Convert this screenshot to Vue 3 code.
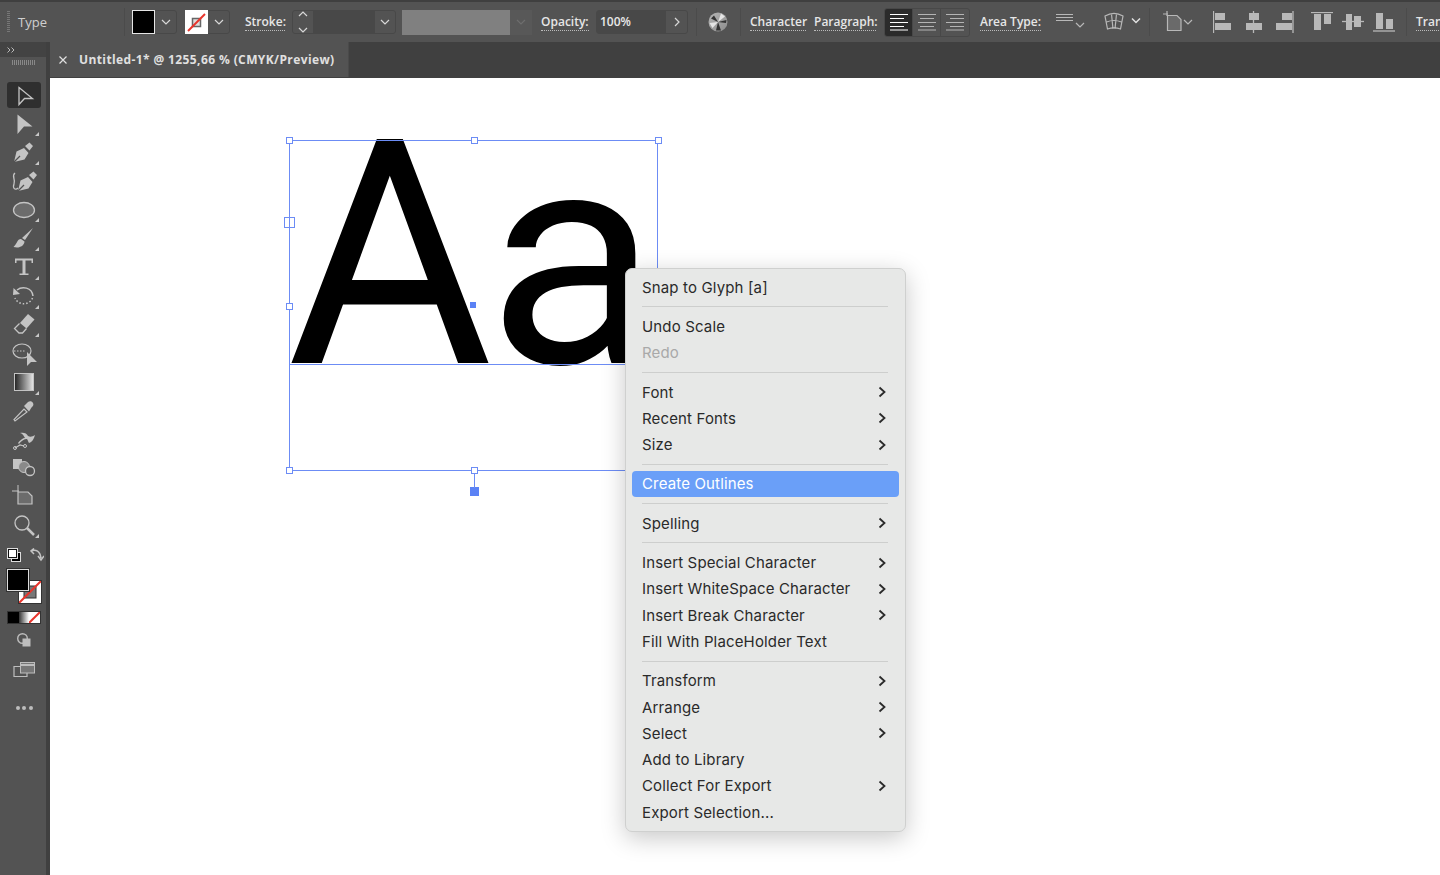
<template>
  <div class="app">
    <!-- options bar -->
    <header class="options">
      <div class="grip"></div>
      <span class="doc-type">Type</span>
      <i class="vsep sep-type"></i>

      <div class="field fill-field">
        <span class="swatch black"></span>
        <span class="drop"><svg width="12" height="8" viewBox="0 0 12 8"><path d="M2 2l4 4 4-4" /></svg></span>
      </div>
      <div class="field stroke-field">
        <span class="swatch none">
          <svg width="23" height="23" viewBox="0 0 23 23">
            <rect x="7.500" y="7.500" width="8" height="8" fill="#ddd" stroke="#666" stroke-width="1.500" />
            <path d="M3 20L20 3" />
          </svg>
        </span>
        <span class="drop"><svg width="12" height="8" viewBox="0 0 12 8"><path d="M2 2l4 4 4-4" /></svg></span>
      </div>

      <span class="lbl stroke-lbl">Stroke:</span>
      <div class="field stroke-size">
        <span class="stepper">
          <svg width="12" height="26" viewBox="0 0 12 26"><path d="M2 7l4-4 4 4M2 19l4 4 4-4" /></svg>
        </span>
        <span class="blank"></span>
        <span class="drop"><svg width="12" height="8" viewBox="0 0 12 8"><path d="M2 2l4 4 4-4" /></svg></span>
      </div>

      <span class="grey-bar"></span>
      <span class="drop-off"><svg width="12" height="8" viewBox="0 0 12 8"><path d="M2 2l4 4 4-4" /></svg></span>

      <span class="lbl opacity-lbl">Opacity:</span>
      <div class="field opacity">
        <span class="value">100%</span>
        <span class="next"><svg width="8" height="12" viewBox="0 0 8 12"><path d="M2 2l4 4-4 4" /></svg></span>
      </div>
      <i class="vsep sep-a"></i>
      <span class="globe">
        <svg width="20" height="20" viewBox="0 0 20 20">
          <defs>
            <linearGradient id="globeFill" x1="0" y1="0" x2="1" y2="1">
              <stop offset="0" stop-color="#b5b5b5" />
              <stop offset="1" stop-color="#8c8c8c" />
            </linearGradient>
          </defs>
          <circle cx="10" cy="10" r="9.500" fill="url(#globeFill)" />
          <path class="g-dark" d="M10 10L6 3.500 3 6.500zM10 10l-2 8.500 5 0zM10 10l8 1 .5-3z" />
          <path class="g-light" d="M10 10L13 1.500l4 3zM10 10l-8.500 1 3 5z" />
        </svg>
      </span>
      <i class="vsep sep-b"></i>

      <span class="lbl char-lbl">Character</span>
      <span class="lbl para-lbl">Paragraph:</span>
      <div class="aligns">
        <span class="align on"><svg width="18" height="18" viewBox="0 0 18 18"><path d="M0 1.500h18M0 5.500h14M0 9.500h18M0 13.500h14M0 17h18" /></svg></span>
        <span class="align"><svg width="18" height="18" viewBox="0 0 18 18"><path d="M0 1.500h18M2 5.500h14M0 9.500h18M2 13.500h14M0 17h18" /></svg></span>
        <span class="align"><svg width="18" height="18" viewBox="0 0 18 18"><path d="M0 1.500h18M4 5.500h14M0 9.500h18M4 13.500h14M0 17h18" /></svg></span>
      </div>

      <span class="lbl area-lbl">Area Type:</span>
      <span class="ico area-ico">
        <svg width="29" height="20" viewBox="0 0 29 20"><path d="M0 2.500h17M0 5.500h17M0 8.500h17" /><path d="M20 11l4 4 4-4" /></svg>
      </span>
      <span class="ico warp-ico">
        <svg width="38" height="22" viewBox="0 0 38 22">
          <path d="M2 5c6-3.500 12-3.500 18 0l-2.500 13c-4-1.500-9-1.500-13 0zM8.500 3l1.500 15M13.500 3l-1.500 15M3.500 11c5-2 10-2 15 0" />
          <path class="thick" d="M29 7.500l4 4 4-4" />
        </svg>
      </span>
      <i class="vsep sep-c"></i>
      <span class="ico art-ico">
        <svg width="30" height="22" viewBox="0 0 30 22">
          <path d="M0 3h5M4 0v5" />
          <path class="doc" d="M4.500 4.500H14l4 4v11H4.500z" />
          <path d="M21 9l4 4 4-4" />
        </svg>
      </span>
      <div class="obj-aligns">
        <svg width="20" height="22" viewBox="0 0 20 22"><path d="M.5 0v22" /><rect x="2" y="2" width="10" height="7" /><rect x="2" y="12" width="16" height="7" /></svg>
        <svg width="18" height="22" viewBox="0 0 18 22"><path d="M8.500 0v22" /><rect x="4" y="2" width="10" height="7" /><rect x="1" y="12" width="16" height="7" /></svg>
        <svg width="19" height="22" viewBox="0 0 19 22"><path d="M18 0v22" /><rect x="7" y="2" width="10" height="7" /><rect x="1" y="12" width="16" height="7" /></svg>
        <svg width="22" height="20" viewBox="0 0 22 20"><path d="M0 .5h22" /><rect x="3" y="2" width="7" height="16" /><rect x="13" y="2" width="7" height="10" /></svg>
        <svg width="22" height="20" viewBox="0 0 22 20"><path d="M0 9.500h22" /><rect x="4" y="2" width="6" height="16" /><rect x="12" y="4" width="7" height="11" /></svg>
        <svg width="22" height="20" viewBox="0 0 22 20"><path d="M0 19h22" /><rect x="3" y="1" width="7" height="16" /><rect x="13" y="7" width="7" height="10" /></svg>
      </div>
      <i class="vsep sep-d"></i>
      <span class="lbl tran-lbl">Transform</span>
    </header>

    <div class="main">
      <!-- tools -->
      <aside class="tools">
        <div class="tools-head">
          <svg width="8" height="6" viewBox="0 0 8 6"><path d="M.5.500L3 3 .5 5.500M4.500.500L7 3 4.500 5.500" /></svg>
        </div>
        <div class="tools-grip"></div>

        <div class="tool active">
          <svg class="ti" viewBox="0 0 34 28"><path d="M12 6.500L25.500 17.500H17.500L12 23.500z" fill="none" stroke-width="1.300" /></svg>
        </div>
        <div class="tool corner">
          <svg class="ti" viewBox="0 0 34 28"><path class="fl" d="M10.500 4.500L25.500 16.500H17L10.500 24z" /></svg>
        </div>
        <div class="tool corner">
          <svg class="ti" viewBox="0 0 34 28">
            <path class="fl" d="M7 24L9.500 13.500 17 10 21.500 15 17.500 21.500zM18 8l4.500-3.500 3.500 3.500-3.500 4.500z" />
            <path class="cut" d="M7 24l6-6" />
          </svg>
        </div>
        <div class="tool">
          <svg class="ti" viewBox="0 0 34 28">
            <path class="fl" d="M11 24L13.500 13.500 21 10 25.500 15 21.500 21.500zM22 8l4.500-3.500 3.500 3.500-3.500 4.500z" />
            <path class="cut" d="M11 24l6-6" />
            <path d="M8 6C4 9 9 12 7 17c-1.500 4 1 7 4 4" fill="none" stroke-width="1.300" />
          </svg>
        </div>
        <div class="tool corner">
          <svg class="ti" viewBox="0 0 34 28"><ellipse cx="17" cy="14" rx="10.500" ry="7.500" fill="#6c6c6c" stroke-width="1.300" /></svg>
        </div>
        <div class="tool corner">
          <svg class="ti" viewBox="0 0 34 28">
            <path class="fl" d="M26 4L18 16 15 14zM14 15c-4 0-4 5-7.500 8 5.500 1.500 10.500-.5 11-5.500z" />
          </svg>
        </div>
        <div class="tool corner">
          <svg class="ti" viewBox="0 0 34 28">
            <path class="fl" d="M8 10V5.500H26V10H24.500V7.500H18.500V20.500H21.500V22H12.500V20.500H15.500V7.500H9.500V10z" />
          </svg>
        </div>
        <div class="tool corner">
          <svg class="ti" viewBox="0 0 34 28">
            <path d="M10 8c5-4 15-3 16 6" fill="none" stroke-width="1.500" />
            <path class="fl" d="M6.500 6l6.500 6-7 1z" />
            <path d="M25.500 16A9.500 9.500 0 0 1 8 16" fill="none" stroke-width="1.500" stroke-dasharray="1.500 2" />
          </svg>
        </div>
        <div class="tool corner">
          <svg class="ti" viewBox="0 0 34 28">
            <path class="fl" d="M13 12l8-9 6.500 5.500-8 9z" />
            <path d="M12.500 12.500L7.500 17.500 12 22h3.500l4-4.500" fill="none" stroke-width="1.300" />
          </svg>
        </div>
        <div class="tool">
          <svg class="ti" viewBox="0 0 34 28">
            <ellipse cx="15" cy="12" rx="9" ry="7" fill="none" stroke-width="1.200" />
            <path d="M7 12h11" stroke-dasharray="1.500 1.500" stroke-width="1.200" />
            <path class="fl" d="M20 13l10 10h-6l-4 4z" />
          </svg>
        </div>
        <div class="tool corner">
          <svg class="ti" viewBox="0 0 34 28">
            <defs>
              <linearGradient id="toolGrad" x1="0" x2="1" y1="0" y2="0">
                <stop offset="0" stop-color="#222" />
                <stop offset="1" stop-color="#e8e8e8" />
              </linearGradient>
            </defs>
            <rect x="7.500" y="5.500" width="19" height="17" fill="url(#toolGrad)" stroke-width="1" />
          </svg>
        </div>
        <div class="tool">
          <svg class="ti" viewBox="0 0 34 28">
            <path d="M8 24l-1-1.500L17 12l3 3z" fill="none" stroke-width="1.200" />
            <path class="fl" d="M17 9l4-4c1.500-1 4-1 5 1s0 3-1.500 4.500L22 14.500z" />
          </svg>
        </div>
        <div class="tool">
          <svg class="ti" viewBox="0 0 34 28">
            <path class="fl" d="M11 18c2-3 5-5 7-5-1-2-3-5-5-5 3-1 7 0 8 3 2 1 4 1 7-1-1 4-3 7-6 8-1-1-1-3-2-4-3 0-6 2-8 5z" />
            <path d="M8 23l5-3 4 1" fill="none" stroke-width="1.200" />
            <circle cx="8" cy="23" r="1.500" fill="none" stroke-width="1" />
            <circle cx="18" cy="21" r="1.500" fill="none" stroke-width="1" />
          </svg>
        </div>
        <div class="tool">
          <svg class="ti" viewBox="0 0 34 28">
            <rect class="fl" x="6" y="5" width="9" height="10" />
            <circle cx="17" cy="13" r="5.500" fill="#8a8a8a" stroke="none" />
            <circle cx="23" cy="17" r="4.500" fill="#535353" stroke-width="1.300" />
          </svg>
        </div>
        <div class="tool">
          <svg class="ti" viewBox="0 0 34 28">
            <path d="M5 8h7M11 2v7" stroke-width="1" />
            <path d="M11 9h10l4 4v8H11z" fill="#6c6c6c" stroke-width="1.200" />
          </svg>
        </div>
        <div class="tool corner">
          <svg class="ti" viewBox="0 0 34 28">
            <circle cx="15" cy="12" r="7" fill="none" stroke-width="1.300" />
            <path d="M20 17l7 7" stroke-width="2.500" />
          </svg>
        </div>

        <div class="color-tools">
          <div class="default-row">
            <svg width="14" height="14" viewBox="0 0 14 14">
              <rect x="4.500" y="4.500" width="9" height="9" fill="#000" stroke="#ddd" />
              <rect x="1.500" y="1.500" width="8" height="8" fill="#fff" stroke="#111" />
              <rect x=".5" y=".5" width="10" height="10" fill="none" stroke="#ddd" />
            </svg>
            <svg width="14" height="14" viewBox="0 0 14 14">
              <path class="swap" d="M1 3c5-2 9 0 10 7M8 8l3 4 3-4M4 0.500L1 3l3 3" />
            </svg>
          </div>
          <div class="fill-stroke">
            <span class="stroke-box">
              <svg width="22" height="22" viewBox="0 0 22 22">
                <rect x="5" y="5" width="12" height="12" fill="#777" stroke="#333" />
                <path d="M0 22L22 0" stroke="#e8352c" stroke-width="2" />
              </svg>
            </span>
            <span class="fill-box"></span>
          </div>
          <div class="modes">
            <span class="m black"></span>
            <span class="m grad"></span>
            <span class="m nonem"><svg width="11" height="11" viewBox="0 0 11 11"><path d="M0 11L11 0" stroke="#e8352c" stroke-width="2" /></svg></span>
          </div>
          <svg class="draw-mode" width="16" height="16" viewBox="0 0 16 16">
            <circle cx="6.500" cy="6.500" r="4.800" fill="none" stroke="#bdbdbd" stroke-width="1.400" />
            <rect x="6.500" y="6.500" width="8" height="8" fill="#bdbdbd" />
          </svg>
          <svg class="screen-mode" width="22" height="16" viewBox="0 0 22 16">
            <path d="M7.500 4.500H1v10h13V11" fill="none" stroke="#bdbdbd" stroke-width="1.200" />
            <rect x="7.500" y=".5" width="14" height="10.500" fill="#777" stroke="#bdbdbd" />
            <path d="M7.500 3h14" stroke="#bdbdbd" stroke-width="2" />
          </svg>
          <div class="more"><i></i><i></i><i></i></div>
        </div>
      </aside>

      <div class="work">
        <div class="tabs">
          <div class="tab">
            <svg width="8" height="8" viewBox="0 0 8 8"><path d="M.5.500l7 7M7.500.500l-7 7" /></svg>
            <span>Untitled-1* @ 1255,66 % (CMYK/Preview)</span>
          </div>
        </div>

        <!-- artboard: the selected text sits freely on the canvas -->
        <div class="canvas">
          <div class="aa">A<span class="small-a">a</span></div>
          <div class="bbox"></div>
          <div class="baseline"></div>
          <i v-for="h in handles" :key="h.id" class="handle" :class="h.kind" :style="{ left: h.x + 'px', top: h.y + 'px' }"></i>
          <div class="stem"></div>
        </div>
      </div>
    </div>

    <!-- context menu -->
    <nav class="menu">
      <template v-for="(item, i) in menu" :key="i">
        <div v-if="item.sep" class="menu-sep"></div>
        <div v-else class="menu-row" :class="{ off: item.off, hot: item.hot }">
          <span>{{ item.label }}</span>
          <svg v-if="item.sub" width="9" height="12" viewBox="0 0 9 12"><path d="M1.500 1.500L6.500 6l-5 4.500" /></svg>
        </div>
      </template>
    </nav>
  </div>
</template>

<script setup>
const handles = [
  { id: 'tl', x: 239, y: 62 },
  { id: 'tc', x: 424, y: 62 },
  { id: 'tr', x: 608, y: 62 },
  { id: 'ml', x: 239, y: 228 },
  { id: 'bl', x: 239, y: 392 },
  { id: 'bc', x: 424, y: 392 },
  { id: 'wide', x: 234, y: 139, kind: 'tall' },
  { id: 'center', x: 420, y: 224, kind: 'dot' },
  { id: 'rot', x: 420, y: 409, kind: 'solid' }
]

const menu = [
  { label: 'Snap to Glyph [a]' },
  { sep: true },
  { label: 'Undo Scale' },
  { label: 'Redo', off: true },
  { sep: true },
  { label: 'Font', sub: true },
  { label: 'Recent Fonts', sub: true },
  { label: 'Size', sub: true },
  { sep: true },
  { label: 'Create Outlines', hot: true },
  { sep: true },
  { label: 'Spelling', sub: true },
  { sep: true },
  { label: 'Insert Special Character', sub: true },
  { label: 'Insert WhiteSpace Character', sub: true },
  { label: 'Insert Break Character', sub: true },
  { label: 'Fill With PlaceHolder Text' },
  { sep: true },
  { label: 'Transform', sub: true },
  { label: 'Arrange', sub: true },
  { label: 'Select', sub: true },
  { label: 'Add to Library' },
  { label: 'Collect For Export', sub: true },
  { label: 'Export Selection...' }
]
</script>

<style>
html,
body {
  margin: 0;
  background: #fff;
  overflow: hidden;
}
</style>

<style scoped>
.app {
  position: relative;
  width: 1440px;
  height: 875px;
  display: flex;
  flex-direction: column;
  overflow: hidden;
  font-family: "Open Sans", "Noto Sans", sans-serif;
  background: #fff;
}

/* options bar */
.options {
  flex: none;
  height: 40px;
  border-top: 2px solid #3f3f3f;
  display: flex;
  align-items: center;
  background: #535353;
  color: #e8e8e8;
  white-space: nowrap;
  overflow: hidden;
}
.options svg path {
  fill: none;
  stroke: #d8d8d8;
  stroke-width: 1.200;
}
.grip {
  flex: none;
  width: 3px;
  height: 22px;
  margin-left: 7px;
  background: repeating-linear-gradient(to bottom, #777 0 1px, transparent 1px 2px);
}
.doc-type {
  flex: none;
  margin-left: 8px;
  width: 36px;
  font-size: 13px;
  color: #cfcfcf;
}
.vsep {
  flex: none;
  width: 1px;
  height: 28px;
  background: #4b4b4b;
}
.sep-type { margin-left: 70px; }
.sep-a { margin-left: 8px; }
.sep-b { margin-left: 12px; }
.sep-c { margin-left: 8px; }
.sep-d { margin-left: 11px; }
.field {
  flex: none;
  display: flex;
  align-items: center;
  height: 24px;
  border: 1px solid #484848;
  border-radius: 3px;
}
.fill-field {
  margin-left: 7px;
  width: 45px;
  box-sizing: border-box;
}
.stroke-field {
  margin-left: 8px;
  width: 45px;
  box-sizing: border-box;
}
.swatch {
  width: 23px;
  height: 24px;
  flex: none;
  box-sizing: border-box;
  margin-left: -1px;
}
.swatch.black {
  background: #000;
  border: 1px solid #e6e6e6;
}
.swatch.none {
  background: #fff;
  display: flex;
  align-items: center;
}
.options .swatch.none svg path {
  stroke: #e8352c;
  stroke-width: 2;
}
.drop {
  flex: 1;
  height: 100%;
  display: flex;
  align-items: center;
  justify-content: center;
}
.lbl {
  flex: none;
  font-size: 12px;
  font-weight: 600;
  line-height: 16px;
  color: #e6e6e6;
  border-bottom: 1px dotted #bbb;
}
.stroke-lbl { margin-left: 15px; width: 40px; }
.stroke-size {
  margin-left: 7px;
  width: 104px;
  box-sizing: border-box;
}
.stepper {
  width: 21px;
  height: 100%;
  flex: none;
  display: flex;
  align-items: center;
  justify-content: center;
  border-right: 1px solid #484848;
  box-sizing: border-box;
}
.blank {
  width: 61px;
  height: 100%;
  flex: none;
  background: #484848;
}
.grey-bar {
  flex: none;
  margin-left: 6px;
  width: 108px;
  height: 25px;
  background: #808080;
}
.drop-off {
  flex: none;
  width: 22px;
  height: 25px;
  background: #585858;
  display: flex;
  align-items: center;
  justify-content: center;
}
.options .drop-off svg path { stroke: #6e6e6e; }
.opacity-lbl { margin-left: 9px; width: 48px; }
.opacity {
  margin-left: 7px;
  width: 92px;
  box-sizing: border-box;
}
.value {
  width: 69px;
  flex: none;
  height: 100%;
  box-sizing: border-box;
  padding-left: 3px;
  background: #484848;
  font-size: 12px;
  font-weight: 600;
  line-height: 22px;
}
.next {
  flex: 1;
  display: flex;
  justify-content: center;
}
.globe {
  flex: none;
  margin-left: 11px;
  display: flex;
}
.options .globe .g-dark {
  fill: #333;
  stroke: none;
}
.options .globe .g-light {
  fill: #e4e4e4;
  stroke: none;
}
.char-lbl { margin-left: 9px; width: 56px; }
.para-lbl { margin-left: 8px; width: 62px; }
.aligns {
  flex: none;
  margin-left: 8px;
  display: flex;
  height: 27px;
  border: 1px solid #484848;
  border-radius: 3px;
  box-sizing: content-box;
}
.align {
  width: 28px;
  display: flex;
  align-items: center;
  justify-content: center;
  border-right: 1px solid #484848;
  box-sizing: border-box;
}
.align:last-child { border-right: 0; }
.align.on {
  background: #2b2b2b;
  border-radius: 2px 0 0 2px;
}
.options .align svg path { stroke: #b4b4b4; }
.options .align.on svg path { stroke: #fff; }
.area-lbl { margin-left: 10px; width: 61px; }
.ico {
  flex: none;
  display: flex;
}
.options .ico svg path { stroke: #b8b8b8; }
.options .ico svg path.thick { stroke: #e0e0e0; stroke-width: 1.500; }
.options .ico svg path.doc { fill: #6a6a6a; }
.area-ico { margin-left: 15px; }
.warp-ico { margin-left: 18px; }
.art-ico { margin-left: 13px; }
.obj-aligns {
  flex: none;
  margin-left: 20px;
  display: flex;
  align-items: center;
  gap: 12px;
}
.obj-aligns svg:nth-child(4) { margin-left: 5px; }
.obj-aligns svg:nth-child(5),
.obj-aligns svg:nth-child(6) { margin-left: -3px; }
.obj-aligns svg rect { fill: #b8b8b8; }
.options .obj-aligns svg path { stroke: #b8b8b8; stroke-width: 1.300; }
.tran-lbl { margin-left: 9px; }

/* main area */
.main {
  flex: 1;
  min-height: 0;
  display: flex;
}
.tools {
  flex: none;
  width: 46px;
  box-sizing: content-box;
  border-right: 4px solid #404040;
  background: #535353;
  display: flex;
  flex-direction: column;
  align-items: flex-start;
}
.tools-head {
  align-self: stretch;
  height: 15px;
  background: #434343;
  padding-left: 7px;
  display: flex;
  align-items: center;
}
.tools-head svg path {
  fill: none;
  stroke: #bbb;
}
.tools-grip {
  width: 23px;
  height: 5px;
  margin: 3px 0 16px 12px;
  background: repeating-linear-gradient(to right, #888 0 1px, transparent 1px 2px);
}
.tool {
  position: relative;
  width: 34px;
  height: 28.700px;
  flex: none;
  margin-left: 7px;
}
.tool.active::before {
  content: "";
  position: absolute;
  left: 0;
  right: 0;
  top: 1px;
  height: 26px;
  background: #2f2f2f;
  border-radius: 3px;
}
.ti {
  position: relative;
  display: block;
  width: 34px;
  height: 28px;
}
.ti * {
  stroke: #c4c4c4;
}
.ti .fl {
  fill: #c4c4c4;
  stroke: none;
}
.ti .cut {
  fill: none;
  stroke: #535353;
  stroke-width: 1.200;
}
.tool.corner::after {
  content: "";
  position: absolute;
  right: 2px;
  bottom: 2px;
  border-style: solid;
  border-width: 0 0 4px 4px;
  border-color: transparent transparent #c8c8c8 transparent;
}
.color-tools {
  display: flex;
  flex-direction: column;
  align-items: center;
  width: 34px;
  margin: 7px 0 0 7px;
}
.default-row {
  align-self: stretch;
  display: flex;
  justify-content: space-between;
  height: 16px;
  align-items: center;
  margin-right: -3px;
}
.swap {
  fill: none;
  stroke: #c4c4c4;
  stroke-width: 1.500;
}
.fill-stroke {
  position: relative;
  align-self: stretch;
  height: 34px;
  margin-top: 6px;
}
.fill-box {
  position: absolute;
  left: 0;
  top: 0;
  width: 22px;
  height: 22px;
  box-sizing: border-box;
  background: #000;
  border: 1px solid #ddd;
  box-shadow: 0 0 0 1px #333;
}
.stroke-box {
  position: absolute;
  right: 0;
  bottom: 0;
  width: 22px;
  height: 22px;
  background: #fff;
  box-shadow: 0 0 0 1px #333;
}
.modes {
  display: flex;
  align-self: stretch;
  margin: 8px 0 0;
  border: 1px solid #333;
  box-sizing: border-box;
  height: 13px;
}
.m { flex: 1; }
.m.black { background: #000; }
.m.grad { background: linear-gradient(to right, #333, #fff); }
.m.nonem { background: #fff; display: flex; }
.draw-mode { margin-top: 8px; }
.screen-mode { margin-top: 14px; }
.more {
  display: flex;
  gap: 2.500px;
  margin-top: 28px;
}
.more i {
  width: 4px;
  height: 4px;
  border-radius: 50%;
  background: #bdbdbd;
}

.work {
  flex: 1;
  min-width: 0;
  display: flex;
  flex-direction: column;
}
.tabs {
  flex: none;
  height: 36px;
  background: #404040;
  display: flex;
}
.tab {
  width: 299px;
  height: 35px;
  box-sizing: border-box;
  padding-left: 9px;
  background: #535353;
  border-right: 1px solid #4a4a4a;
  display: flex;
  align-items: center;
  gap: 12px;
  font-size: 12px;
  font-weight: 700;
  letter-spacing: 0.390px;
  color: #e0e0e0;
  white-space: nowrap;
}
.tab svg path {
  stroke: #e0e0e0;
  stroke-width: 1.200;
}

/* canvas */
.canvas {
  position: relative;
  flex: 1;
  background: #fff;
  overflow: hidden;
}
.aa {
  position: absolute;
  left: 237px;
  top: 20px;
  font-family: Roboto, "Liberation Sans", sans-serif;
  font-size: 315px;
  line-height: 1;
  letter-spacing: -6px;
  color: #000;
}
.small-a {
  display: inline-block;
  font-size: 303px;
  transform: scaleX(1.040);
  transform-origin: left bottom;
}
.bbox {
  position: absolute;
  left: 239px;
  top: 62px;
  width: 369px;
  height: 331px;
  box-sizing: border-box;
  border: 1px solid #6c8cf5;
}
.baseline {
  position: absolute;
  left: 239px;
  top: 286px;
  width: 369px;
  height: 1px;
  background: #6c8cf5;
}
.handle {
  position: absolute;
  width: 7px;
  height: 7px;
  box-sizing: border-box;
  background: #fff;
  border: 1px solid #6c8cf5;
  margin: -3px 0 0 -3px;
}
.handle.tall {
  width: 11px;
  height: 11px;
  margin: 0;
  background: linear-gradient(to right, transparent 4px, #6c8cf5 4px 5px, transparent 5px), #fff;
}
.handle.dot {
  width: 6px;
  height: 6px;
  margin: 0;
  border: 0;
  background: #5b82f5;
}
.handle.solid {
  width: 9px;
  height: 9px;
  margin: 0;
  border: 0;
  background: #5b82f5;
}
.stem {
  position: absolute;
  left: 424px;
  top: 395px;
  width: 1px;
  height: 15px;
  background: #6c8cf5;
}

/* context menu */
.menu {
  position: absolute;
  left: 625px;
  top: 268px;
  width: 281px;
  height: 564px;
  box-sizing: border-box;
  padding: 5px 6px;
  background: #e7e8e7;
  border: 1px solid #cfd0cf;
  border-radius: 7px;
  box-shadow: 0 6px 24px rgba(0, 0, 0, 0.22);
  font-family: Inter, "Liberation Sans", sans-serif;
  font-size: 15px;
  letter-spacing: 0.150px;
  color: #2a2a2a;
}
.menu-row {
  height: 26.300px;
  box-sizing: border-box;
  padding: 0 12px 0 10px;
  display: flex;
  align-items: center;
  justify-content: space-between;
  border-radius: 4px;
  white-space: nowrap;
}
.menu-row.off { color: #a9a9a9; }
.menu-row.hot {
  background: #6a9ff8;
  color: #fff;
}
.menu-row svg path {
  fill: none;
  stroke: #2a2a2a;
  stroke-width: 1.800;
}
.menu-sep {
  height: 1px;
  margin: 6px 11px 6px 10px;
  background: #cdcecd;
}
</style>
